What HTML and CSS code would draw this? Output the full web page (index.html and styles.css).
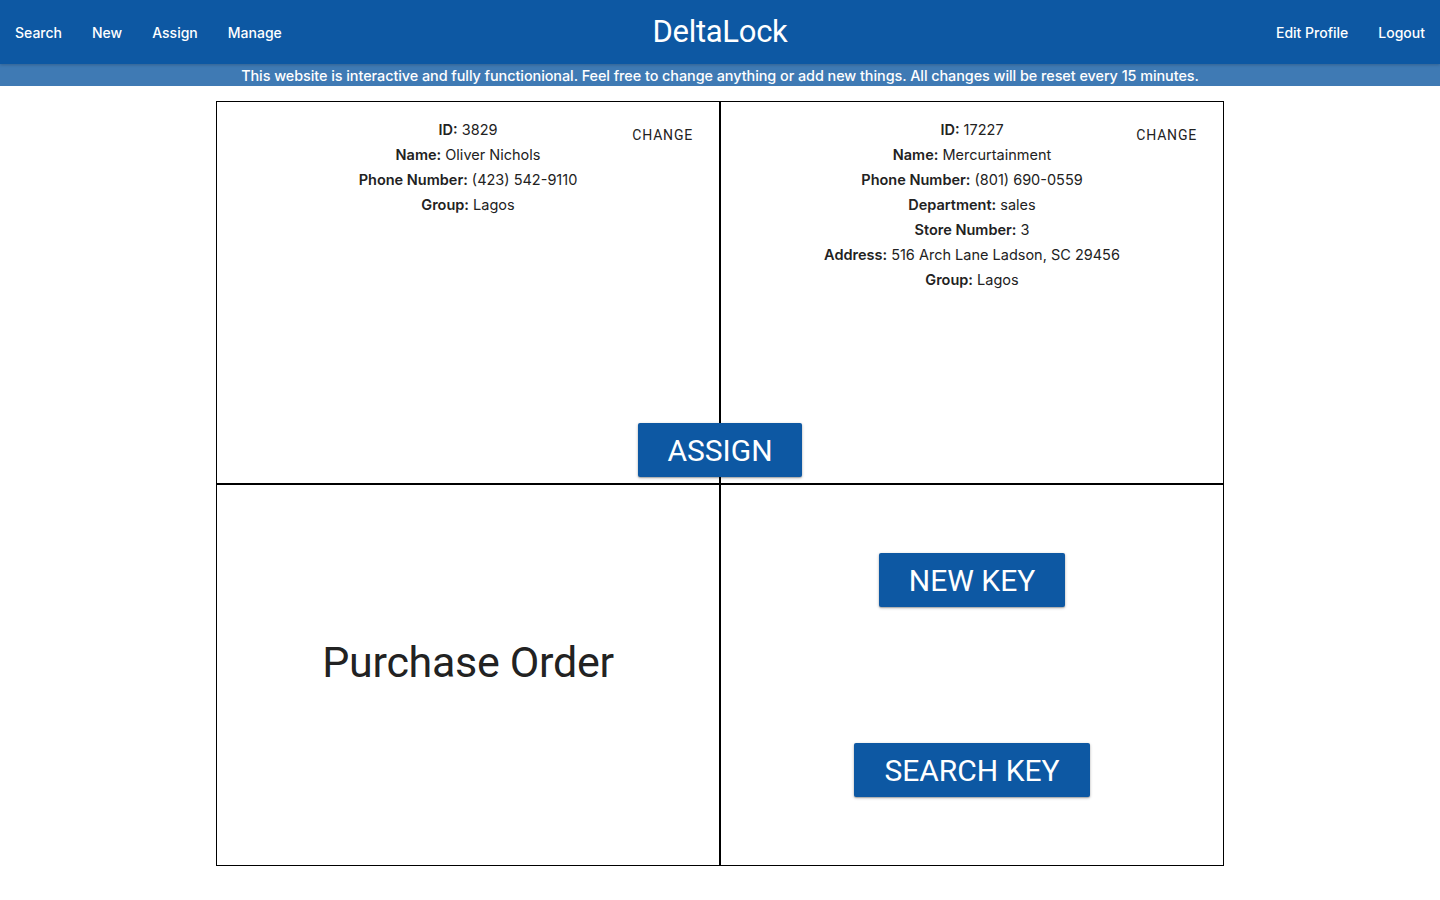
FILE: index.html
```html
<!DOCTYPE html>
<html>
<head>
<meta charset="utf-8">
<title>DeltaLock</title>
<link rel="stylesheet" href="styles.css">
</head>
<body>
<header class="topbar">
  <nav class="nav-left">
    <a class="nav-link" href="#">Search</a>
    <a class="nav-link" href="#">New</a>
    <a class="nav-link" href="#">Assign</a>
    <a class="nav-link" href="#">Manage</a>
  </nav>
  <div class="brand">DeltaLock</div>
  <nav class="nav-right">
    <a class="nav-link" href="#">Edit Profile</a>
    <a class="nav-link" href="#">Logout</a>
  </nav>
</header>
<div class="banner">This website is interactive and fully functionional. Feel free to change anything or add new things. All changes will be reset every 15 minutes.</div>

<main class="board">
  <section class="cell info-cell">
    <div class="info">
      <p><b>ID:</b> 3829</p>
      <p><b>Name:</b> Oliver Nichols</p>
      <p><b>Phone Number:</b> (423) 542-9110</p>
      <p><b>Group:</b> Lagos</p>
    </div>
    <button class="change">Change</button>
  </section>
  <section class="cell info-cell">
    <div class="info">
      <p><b>ID:</b> 17227</p>
      <p><b>Name:</b> Mercurtainment</p>
      <p><b>Phone Number:</b> (801) 690-0559</p>
      <p><b>Department:</b> sales</p>
      <p><b>Store Number:</b> 3</p>
      <p><b>Address:</b> 516 Arch Lane Ladson, SC 29456</p>
      <p><b>Group:</b> Lagos</p>
    </div>
    <button class="change">Change</button>
  </section>
  <section class="cell po-cell">
    <h2 class="po-title">Purchase Order</h2>
  </section>
  <section class="cell key-cell">
    <button class="big-btn">New Key</button>
    <button class="big-btn">Search Key</button>
  </section>
  <button class="big-btn assign">Assign</button>
</main>
</body>
</html>
```

FILE: styles.css
```css
* { box-sizing: border-box; }
html, body { margin: 0; padding: 0; background: #fff; }
body { font-family: Inter, "Noto Sans", "Liberation Sans", sans-serif; color: #222; }

.topbar {
  height: 64px;
  background: #0d58a3;
  display: flex;
  align-items: center;
  justify-content: space-between;
  position: relative;
  box-shadow: 0 1px 3px rgba(0,0,0,0.2);
  z-index: 2;
}
.nav-left, .nav-right { display: flex; align-items: center; flex: 1; }
.nav-right { justify-content: flex-end; }
.nav-link {
  color: #fff;
  text-decoration: none;
  font-size: 14px;
  font-weight: 500;
  padding: 0 15px;
}
.brand {
  font-family: Roboto, "Liberation Sans", sans-serif;
  color: #fff;
  font-size: 31px;
  font-weight: 400;
  letter-spacing: -0.3px;
  flex: none;
  margin-top: -1px;
}
.banner {
  height: 22px;
  padding-top: 1px;
  line-height: 22px;
  background: #3f7ab4;
  color: #fff;
  text-align: center;
  font-size: 14.4px;
  font-weight: 500;
  letter-spacing: -0.05px;
}

.board {
  position: relative;
  width: 1008px;
  margin: 15px auto 0;
  display: grid;
  grid-template-columns: 504px 504px;
  grid-template-rows: 383px 382px;
}
.cell {
  border: 1px solid #000;
  position: relative;
}
.info-cell { padding-top: 15px; }
.info { text-align: center; font-size: 14.5px; }
.info p { margin: 0; line-height: 25px; }
.info b { font-weight: 600; }
.change {
  position: absolute;
  top: 19px;
  right: 10px;
  background: none;
  border: 0;
  font-family: Roboto, "Liberation Sans", sans-serif;
  font-size: 14px;
  letter-spacing: 0.8px;
  text-transform: uppercase;
  color: #222;
  padding: 6px 16px;
  cursor: pointer;
}

.po-cell {
  display: flex;
  align-items: center;
  justify-content: center;
  padding-bottom: 26px;
}
.po-title {
  margin: 0;
  font-family: Roboto, "Liberation Sans", sans-serif;
  font-weight: 400;
  font-size: 43px;
  color: #222;
  letter-spacing: -0.3px;
}

.key-cell {
  display: flex;
  flex-direction: column;
  align-items: center;
  justify-content: space-around;
}
.big-btn {
  height: 54px;
  padding: 0 30px;
  background: #0d58a3;
  color: #fff;
  border: 0;
  border-radius: 2px;
  font-family: Roboto, "Liberation Sans", sans-serif;
  font-size: 30px;
  font-weight: 400;
  text-transform: uppercase;
  box-shadow: 0 1px 3px rgba(0,0,0,0.3), 0 1px 1px rgba(0,0,0,0.15);
  cursor: pointer;
}
.assign {
  position: absolute;
  left: 422px;
  top: 322px;
  width: 164px;
  padding: 0;
}
```
